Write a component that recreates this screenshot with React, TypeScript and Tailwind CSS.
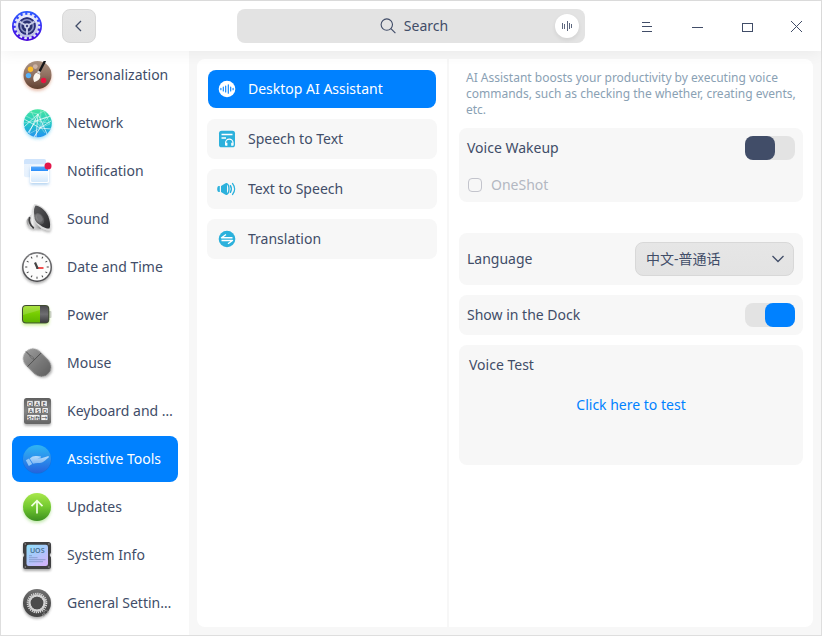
import { useState, type ReactNode } from "react";

/* ---------- sidebar icons, drawn on a 32 x 32 grid ---------- */

function Icon32({ children }: { children: ReactNode }) {
  return (
    <svg viewBox="0 0 32 32" className="size-8 shrink-0 overflow-visible" aria-hidden="true">
      {children}
    </svg>
  );
}

function Shade({ id, from, to, mid }: { id: string; from: string; to: string; mid?: string }) {
  return (
    <linearGradient id={id} x1="0" y1="0" x2="0" y2="1">
      <stop offset="0" stopColor={from} />
      {mid && <stop offset="0.5" stopColor={mid} />}
      <stop offset="1" stopColor={to} />
    </linearGradient>
  );
}

function Glow({ id, color, dev = 1.6 }: { id: string; color: string; dev?: number }) {
  return (
    <filter id={id} x="-30%" y="-30%" width="160%" height="170%">
      <feDropShadow dx="0" dy="2" stdDeviation={dev} floodColor={color} floodOpacity="0.4" />
    </filter>
  );
}

const PaletteIcon = (
  <Icon32>
    <defs>
      <Shade id="pal" from="#ab9382" mid="#8f7060" to="#60402f" />
      <Glow id="palGlow" color="#c2603a" />
    </defs>
    <circle cx="16.5" cy="16" r="14" fill="url(#pal)" filter="url(#palGlow)" />
    <circle cx="14.3" cy="7.6" r="2.4" fill="#cdb3a6" />
    <circle cx="9.5" cy="10.3" r="2.7" fill="#fbbb2b" />
    <circle cx="7.5" cy="16.6" r="2.7" fill="#57b1f8" />
    <circle cx="22.6" cy="21.5" r="2.7" fill="#e8143f" />
    <path d="M22.600 2h2.400l-1 2.400-4.700 9-2-1.200z" fill="#17171a" />
    <path d="M17.200 11.600l2.500 1.400-.9 2-2.800-1.500z" fill="#dcdcdc" />
    <path d="M15.400 13.700l3.600 1.900c1 3-1 6.400-5.800 7.400-.4-1.600-1.300-2.600-.8-5 .5-1.800 1.500-3.400 3-4.300z" fill="#fbf6ee" />
  </Icon32>
);

const NetworkIcon = (
  <Icon32>
    <defs>
      <Shade id="net" from="#46e5a0" mid="#22c8c4" to="#2492f2" />
      <Glow id="netGlow" color="#2fb8ee" />
      <clipPath id="netClip"><circle cx="16.800" cy="16.300" r="14" /></clipPath>
    </defs>
    <circle cx="16.8" cy="16.3" r="14" fill="url(#net)" filter="url(#netGlow)" />
    <g clipPath="url(#netClip)" fill="none" stroke="#fff">
      <path strokeWidth=".8" opacity=".85" d="M3 20L17 7l9 20M17 7l-2 23M3 12l16 9 11 1M6 27l9-13 15-5M17 7L8 26M13 30l6-9 11-7" />
      <path strokeWidth=".45" opacity=".75" d="M8 5l9 2 6-3M23 4l6 13-10 4M5 9l10 5 10-4-6 11M3 16l12-2 13 2M8 27l11-6M20 3l-1 18M10 4l5 10 9 12M28 9L13 30" />
    </g>
  </Icon32>
);

const NotificationIcon = (
  <Icon32>
    <defs>
      <Shade id="noBack" from="#eef5fe" to="#e6f1fd" />
      <Shade id="noFront" from="#fdfeff" to="#d6e9fb" />
      <Shade id="noBar" from="#56a8fb" to="#2b8ffb" />
      <Glow id="noGlow" color="#4a96dd" />
    </defs>
    <rect x="3" y="4.300" width="22" height="18" rx="2" fill="url(#noBack)" />
    <path d="M3 9V6a2 2 0 012-2h18a2 2 0 012 2v3z" fill="#cfe4fc" />
    <rect x="9" y="10.500" width="19" height="17.500" rx="1.800" fill="#fff" filter="url(#noGlow)" />
    <path d="M10 16v9.500a1.500 1.500 0 001.500 1.500h14a1.500 1.500 0 001.500-1.500V16z" fill="url(#noFront)" />
    <path d="M10 16v-4.500h17V16z" fill="url(#noBar)" />
    <circle cx="27" cy="11" r="3.500" fill="#e3174b" />
  </Icon32>
);

const SoundIcon = (
  <Icon32>
    <defs>
      <linearGradient id="spBody" x1="0" x2="1" y1="0" y2="0">
        <stop offset="0" stopColor="#9a9a9a" />
        <stop offset=".4" stopColor="#efefef" />
        <stop offset="1" stopColor="#858585" />
      </linearGradient>
      <linearGradient id="spCone" x1="0" y1="0" x2="1" y2="1">
        <stop offset="0" stopColor="#5a5a5c" />
        <stop offset="1" stopColor="#2c2c2e" />
      </linearGradient>
      <radialGradient id="spCap" cx=".45" cy=".4">
        <stop offset="0" stopColor="#a0a0a2" />
        <stop offset="1" stopColor="#58585a" />
      </radialGradient>
      <Glow id="spGlow" color="#555" dev={1.2} />
    </defs>
    <g filter="url(#spGlow)">
      <path d="M5.800 16.800C7 14 10 12.500 12 9l8 17c-4-.8-7-.3-9.500-1-3.500-1-5.500-4.700-4.700-8.200z" fill="url(#spBody)" />
      <path d="M8.800 14.200c-1.400 3 0 8.200 4 11" fill="none" stroke="#3f3f41" strokeWidth="1.800" />
      <path d="M13.600 1C20 1.600 27.300 7.600 29.400 15.500c1.200 4.600 1.300 9.500-.2 11.700-4.500 1-11.600-2.200-15.200-8.700C10.600 12.300 10.600 4.500 13.600 1z" fill="#dcdcdc" />
    </g>
    <path d="M14.600 2.600C20.500 3.500 26.200 9 28.200 16c1.100 4 1.200 7.400.3 9.400-4 .5-10-2.500-13.200-8C12.200 12 12.400 5.300 14.600 2.600z" fill="url(#spCone)" />
    <ellipse cx="18.300" cy="15.800" rx="4.300" ry="6.200" transform="rotate(-31 18.300 15.800)" fill="url(#spCap)" />
    <ellipse cx="18.800" cy="15.200" rx="2.400" ry="3.600" transform="rotate(-31 18.800 15.200)" fill="#77777a" />
  </Icon32>
);

const ClockIcon = (
  <Icon32>
    <defs>
      <Shade id="clk" from="#77777a" to="#4a4a4d" />
      <Glow id="clkGlow" color="#444" dev={1.2} />
    </defs>
    <circle cx="16" cy="16" r="15" fill="url(#clk)" filter="url(#clkGlow)" />
    <circle cx="16" cy="16" r="13.500" fill="#fcfcfc" />
    <g stroke="#444" strokeWidth="1">
      {[0, 30, 60, 90, 120, 150, 180, 210, 240, 270, 300, 330].map((a) => (
        <path key={a} d="M16 4.200v2.100" transform={`rotate(${a} 16 16)`} />
      ))}
    </g>
    <path d="M14 11.500l2.300 5.300" stroke="#444" strokeWidth="2.200" />
    <path d="M16.500 17h6" stroke="#f25252" strokeWidth="2" />
    <circle cx="16.300" cy="16.900" r="1.200" fill="#444" />
  </Icon32>
);

const PowerIcon = (
  <Icon32>
    <defs>
      <Shade id="bat" from="#9adb1d" mid="#74cc00" to="#5fb400" />
      <Shade id="batDark" from="#4c4c4f" mid="#6e6e71" to="#3c3c3f" />
      <Glow id="batGlow" color="#7fd000" dev={1.400} />
    </defs>
    <rect x="27.500" y="12" width="3" height="7" rx="1" fill="#cfcfd2" />
    <rect x="1" y="6" width="27.300" height="18.500" rx="4" fill="#414b33" filter="url(#batGlow)" />
    <path d="M19 7h5.300a3 3 0 013 3v10.500a3 3 0 01-3 3H19z" fill="url(#batDark)" />
    <path d="M5 7h14v16.500H5a3 3 0 01-3-3V10a3 3 0 013-3z" fill="url(#bat)" />
    <path d="M5 7h14v4L2 16v-6a3 3 0 013-3z" fill="#fff" opacity=".16" />
  </Icon32>
);

const MouseIcon = (
  <Icon32>
    <defs>
      <linearGradient id="mou" x1="0" y1="0" x2="0" y2="1">
        <stop offset="0" stopColor="#9a9a9a" />
        <stop offset=".5" stopColor="#7b7b7b" />
        <stop offset="1" stopColor="#636363" />
      </linearGradient>
      <Glow id="mouGlow" color="#444" dev={1.200} />
    </defs>
    <g transform="rotate(-45 16 15.500)">
      <rect x="6.200" y="-.3" width="19.600" height="31.600" rx="9.800" fill="url(#mou)" filter="url(#mouGlow)" />
      <path d="M6.500 11.700h19M16 0v11.500" fill="none" stroke="#4c4c4c" strokeWidth=".9" />
      <rect x="15.200" y="6" width="1.600" height="4.500" rx=".8" fill="#8d8d8d" stroke="#505050" strokeWidth=".5" />
    </g>
  </Icon32>
);

function Key({ x, y, w, label }: { x: number; y: number; w: number; label: string }) {
  return (
    <g>
      <rect x={x} y={y} width={w} height="6.100" rx="1" fill="#efefef" stroke="#3d3d3d" strokeWidth=".5" />
      <text x={x + w / 2} y={y + 5.100} textAnchor="middle" fontSize="5.800" fill="#333">
        {label}
      </text>
    </g>
  );
}

const KeyboardIcon = (
  <Icon32>
    <defs>
      <Shade id="kb" from="#606060" mid="#858585" to="#646464" />
      <Glow id="kbGlow" color="#444" dev={1.200} />
    </defs>
    <rect x="3" y="3" width="27" height="26" rx="2.500" fill="url(#kb)" filter="url(#kbGlow)" />
    <Key x={5.8} y={5.600} w={6.300} label="Q" />
    <Key x={12.900} y={5.600} w={6.300} label="A" />
    <Key x={20} y={5.600} w={6.300} label="E" />
    <Key x={6.800} y={12.500} w={6.300} label="A" />
    <Key x={13.900} y={12.500} w={6.300} label="S" />
    <Key x={21} y={12.500} w={6.300} label="D" />
    <Key x={5.800} y={19.400} w={13.200} label="Shift" />
    <Key x={19.900} y={19.400} w={7} label="→" />
  </Icon32>
);

const AssistiveIcon = (
  <Icon32>
    <defs>
      <Shade id="ast" from="#2fb5f3" mid="#2b8eec" to="#2563dc" />
      <Shade id="astHand" from="#b8dcfc" to="#7db8f5" />
    </defs>
    <circle cx="16" cy="16.500" r="14.300" fill="#1b66c4" opacity=".6" />
    <circle cx="16" cy="16" r="14" fill="url(#ast)" />
    <path d="M4.800 17.200l3.200-1.700 3.200 5.600-3.400 2z" fill="#8fc5f8" />
    <path d="M8.800 15.600c2-2.200 4.700-2.900 6.800-2.500 1.500.2 3 .1 4.100.4.900.4.200 1.200-.8 1.300l-2.600.4 4 .1 6.500-2.100c1-.3 1.600.5.800 1.200-2 1.600-4.200 4.100-6.500 5-2.800.9-6.100.1-9.100 1.300z" fill="url(#astHand)" />
  </Icon32>
);

const UpdatesIcon = (
  <Icon32>
    <defs>
      <Shade id="upd" from="#a9e84c" mid="#72c92f" to="#3c8f1f" />
      <Glow id="updGlow" color="#69c63a" />
    </defs>
    <circle cx="16" cy="16" r="14" fill="url(#upd)" filter="url(#updGlow)" />
    <path d="M16 22.500V10M10.500 15.200L16 9.700l5.500 5.500" fill="none" stroke="#f0ffe0" strokeWidth="1.700" />
  </Icon32>
);

const SystemInfoIcon = (
  <Icon32>
    <defs>
      <linearGradient id="sys" x1="0" y1="0" x2=".7" y2="1">
        <stop offset="0" stopColor="#8fe0fb" />
        <stop offset=".5" stopColor="#a8c9fb" />
        <stop offset="1" stopColor="#cfb5fa" />
      </linearGradient>
      <Glow id="sysGlow" color="#333" dev={1.200} />
    </defs>
    <path d="M4.500 3h23A2.500 2.500 0 0130 5.500v8l-1.400 2.500L30 18.500v9a2.500 2.500 0 01-2.500 2.500h-23A2.500 2.500 0 012 27.500v-9L3.400 16 2 13.500v-8A2.500 2.500 0 014.500 3z" fill="#414143" filter="url(#sysGlow)" />
    <rect x="5.500" y="5.700" width="21.500" height="21.300" rx="2.200" fill="url(#sys)" />
    <g fill="#9a9a9a">
      <circle cx="4.300" cy="5" r=".7" /><circle cx="27.900" cy="5" r=".7" /><circle cx="4.300" cy="28" r=".7" /><circle cx="27.900" cy="28" r=".7" />
    </g>
    <text x="16.200" y="13.800" textAnchor="middle" fontSize="7" fontWeight="600" fill="#46708f">UOS</text>
    <path d="M8 16.700h3M8 18.700h8.500M8 20.700h16.500M8 22.700h14" stroke="#7f94c4" strokeWidth=".8" />
  </Icon32>
);

const GeneralIcon = (
  <Icon32>
    <defs>
      <Shade id="gen" from="#737373" mid="#515151" to="#434343" />
      <Glow id="genGlow" color="#444" dev={1.200} />
    </defs>
    <circle cx="16" cy="16" r="14" fill="url(#gen)" filter="url(#genGlow)" />
    <circle cx="16" cy="16" r="9.400" fill="none" stroke="#e2e2e2" strokeWidth="1.800" strokeDasharray="1.200 .908" />
    <circle cx="16" cy="16" r="7.500" fill="none" stroke="#d2d2d2" strokeWidth="2.400" />
    <circle cx="16" cy="16" r="6.200" fill="#4c4c4c" />
    <circle cx="25" cy="25.300" r="2" fill="none" stroke="#a5a5a5" strokeWidth="1" strokeDasharray=".9 .6" />
    <circle cx="22.600" cy="28" r="1.100" fill="none" stroke="#999" strokeWidth=".8" />
  </Icon32>
);

function AppLogo() {
  return (
    <svg viewBox="0 0 30 30" className="size-[30px] shrink-0" aria-hidden="true">
      <defs>
        <Shade id="logo" from="#2c5cff" mid="#3a32f5" to="#4a06d8" />
        <Shade id="logoRing" from="#eceefa" to="#bcc0e0" />
      </defs>
      <circle cx="15" cy="15" r="15" fill="url(#logo)" />
      <circle cx="15" cy="15" r="12" fill="none" stroke="#dfe3fa" strokeWidth="2.600" strokeDasharray="2.600 2.112" />
      <circle cx="15" cy="15" r="10" fill="none" stroke="url(#logoRing)" strokeWidth="2.600" />
      <circle cx="15" cy="15" r="8.700" fill="#2a3070" />
      <circle cx="15" cy="15" r="6.300" fill="none" stroke="#8f95c6" strokeWidth="1.600" />
      <g stroke="#c4c9e6" strokeWidth="2">
        <path d="M15 15v8.700M15 15L7.500 10.700M15 15l7.500-4.300" />
      </g>
      <circle cx="15" cy="15" r="2.800" fill="#d3d7ee" />
      <circle cx="15" cy="15" r="1.200" fill="#3a3f80" />
    </svg>
  );
}

/* ---------- tool list icons, drawn on a 20 x 20 grid ---------- */

const AssistantGlyph = (
  <svg viewBox="0 0 20 20" className="size-5 shrink-0" aria-hidden="true">
    <circle cx="10" cy="10" r="8.300" fill="#fff" />
    <path d="M3.900 9.200v1.600M6.300 8v4M8.700 7v6M11.300 5.800v8.400M13.700 8v4M16.100 9.200v1.600" stroke="#0081ff" strokeWidth="1.100" strokeLinecap="round" />
  </svg>
);

const SpeechToTextGlyph = (
  <svg viewBox="0 0 20 20" className="size-5 shrink-0" aria-hidden="true">
    <rect x="2" y="1.700" width="16" height="16.600" rx="2.600" fill="#2cb1dc" />
    <path d="M4.500 5.500h11M4.500 9h4.500" stroke="#fff" strokeWidth="1.300" />
    <path d="M8.600 16.500v-2.700a3.700 3.700 0 017.400 0v2.700" fill="none" stroke="#fff" strokeWidth="1.200" />
    <path d="M8.800 13.800h1.600v3H8.800zM14.200 13.800h1.600v3h-1.600z" fill="#fff" />
  </svg>
);

const TextToSpeechGlyph = (
  <svg viewBox="0 0 20 20" className="size-5 shrink-0" aria-hidden="true">
    <path d="M2.800 7v6H1.800C.8 13 .2 11.700.2 10s.6-3 1.600-3z" fill="#2cb1dc" />
    <path d="M4 7l4.500-2.700c.7-.4 1.500 0 1.500.8v9.800c0 .8-.8 1.200-1.500.8L4 13z" fill="#2cb1dc" />
    <path d="M9.500 4.700c3.300 1.300 3.300 9.300 0 10.600M13.400 6.700c1.200 2 1.200 4.600 0 6.600M15.600 4.600c2.600 3.200 2.600 7.600 0 10.800" fill="none" stroke="#2cb1dc" strokeWidth="1.400" strokeLinecap="round" />
  </svg>
);

const TranslationGlyph = (
  <svg viewBox="0 0 20 20" className="size-5 shrink-0" aria-hidden="true">
    <circle cx="10" cy="10" r="8.300" fill="#2cb1dc" />
    <path d="M15.500 8.800h-11L9 5.500M4.500 11.500h11L11 14.800" fill="none" stroke="#fff" strokeWidth="1.400" strokeLinejoin="round" />
  </svg>
);

/* ---------- shared pieces ---------- */

function WindowButton({ label, children }: { label: string; children: ReactNode }) {
  return (
    <button type="button" aria-label={label} className="flex h-[50px] w-[50px] items-center justify-center">
      <svg viewBox="0 0 14 14" className="size-3.5 overflow-visible" shapeRendering="crispEdges" fill="#414d68">
        {children}
      </svg>
    </button>
  );
}

function Toggle({ id, on, onChange }: { id: string; on: boolean; onChange: (v: boolean) => void }) {
  return (
    <input
      id={id}
      type="checkbox"
      role="switch"
      checked={on}
      onChange={(e) => onChange(e.target.checked)}
      className="h-6 w-[50px] shrink-0 appearance-none rounded-lg bg-[#e3e3e3] before:block before:h-6 before:w-[30px] before:rounded-lg before:bg-[#414d68] checked:before:ml-5 checked:before:bg-[#0081ff]"
    />
  );
}

const categories = [
  { name: "Personalization", icon: PaletteIcon },
  { name: "Network", icon: NetworkIcon },
  { name: "Notification", icon: NotificationIcon },
  { name: "Sound", icon: SoundIcon },
  { name: "Date and Time", icon: ClockIcon },
  { name: "Power", icon: PowerIcon },
  { name: "Mouse", icon: MouseIcon },
  { name: "Keyboard and …", icon: KeyboardIcon },
  { name: "Assistive Tools", icon: AssistiveIcon },
  { name: "Updates", icon: UpdatesIcon },
  { name: "System Info", icon: SystemInfoIcon },
  { name: "General Settin…", icon: GeneralIcon },
];

const tools = [
  { name: "Desktop AI Assistant", icon: AssistantGlyph },
  { name: "Speech to Text", icon: SpeechToTextGlyph },
  { name: "Text to Speech", icon: TextToSpeechGlyph },
  { name: "Translation", icon: TranslationGlyph },
];

function TitleBar() {
  return (
    <header className="relative z-10 grid h-[50px] grid-cols-[236px_minmax(0,1fr)_236px] items-center bg-white shadow-[0_3px_14px_rgba(0,0,0,0.05)]">
      <div className="flex items-center gap-5 pl-[11px]">
        <AppLogo />
        <button
          type="button"
          aria-label="Back"
          className="flex size-[34px] items-center justify-center rounded-lg border border-[#d8d8d8] bg-linear-to-b from-[#e6e6e6] to-[#e3e3e3]"
        >
          <svg viewBox="0 0 12 12" className="size-3" fill="none" stroke="#414d68" strokeWidth="1.300">
            <path d="M8 1L3 6l5 5" />
          </svg>
        </button>
      </div>
      <div className="flex h-[34px] items-center rounded-lg bg-[#e3e3e3] pr-1.5">
        <label className="flex min-w-0 flex-1 items-center justify-center gap-2 pl-9">
          <svg viewBox="0 0 16 16" className="size-4 shrink-0" fill="none" stroke="#414d68" strokeWidth="1.100">
            <circle cx="6.800" cy="6.600" r="5.700" />
            <path d="M10.900 10.700l4.500 4.500" />
          </svg>
          <input
            type="text"
            aria-label="Search"
            placeholder="Search"
            className="field-sizing-content bg-transparent outline-none placeholder:text-[#414d68]"
          />
        </label>
        <button
          type="button"
          aria-label="Voice search"
          className="flex size-6 items-center justify-center rounded-full bg-white shadow-[0_2px_4px_rgba(0,0,0,0.08)]"
        >
          <svg viewBox="0 0 12 12" className="size-3" stroke="#414d68" shapeRendering="crispEdges">
            <path d="M1.500 3v6M3.500 4v5M6.500 1v10M8.500 3v6M10.500 4v4" strokeWidth="1" opacity=".85" />
          </svg>
        </button>
      </div>
      <div className="flex justify-end">
        <WindowButton label="Menu">
          <path d="M3 3h8v1H3zM3 7h10v1H3zM3 12h10v1H3z" />
        </WindowButton>
        <WindowButton label="Minimize">
          <path d="M3 8h11v1H3z" />
        </WindowButton>
        <WindowButton label="Maximize">
          <path d="M3 4h11v9H3zM4 5v7h9V5z" fillRule="evenodd" />
        </WindowButton>
        <WindowButton label="Close">
          <path d="M2 2l11 11M13 2L2 13" stroke="#414d68" strokeWidth="1" fill="none" />
        </WindowButton>
      </div>
    </header>
  );
}

export default function App() {
  const [category, setCategory] = useState("Assistive Tools");
  const [tool, setTool] = useState("Desktop AI Assistant");
  const [wakeup, setWakeup] = useState(false);
  const [dock, setDock] = useState(true);

  return (
    <div className="flex min-h-screen flex-col border border-[#dedede] bg-[#f7f7f7] font-['Noto_Sans','Noto_Sans_CJK_SC',sans-serif] text-sm text-[#414d68]">
      <TitleBar />
      <div className="flex flex-1">
        <nav className="flex w-[188px] shrink-0 flex-col gap-0.5 bg-white px-[11px] pt-px">
          {categories.map(({ name, icon }) => (
            <button
              key={name}
              type="button"
              onClick={() => setCategory(name)}
              className={
                name === category
                  ? "flex h-[46px] items-center gap-3.5 rounded-lg bg-[#0081ff] pl-[9px] text-left whitespace-nowrap text-white"
                  : "flex h-[46px] items-center gap-3.5 rounded-lg pl-[9px] text-left whitespace-nowrap"
              }
            >
              {icon}
              {name}
            </button>
          ))}
        </nav>

        <main className="flex min-w-0 flex-1 p-2">
          <div className="flex min-w-0 flex-1 gap-0.5 overflow-hidden rounded-lg">
            <ul className="flex w-[250px] shrink-0 flex-col gap-2.5 bg-white p-2.5">
              {tools.map(({ name, icon }) => (
                <li key={name} className="flex h-10 items-center">
                  <button
                    type="button"
                    onClick={() => setTool(name)}
                    className={
                      name === tool
                        ? "mx-px flex h-[38px] flex-1 items-center gap-[11px] rounded-lg bg-[#0081ff] pl-[9px] text-white"
                        : "flex h-10 flex-1 items-center gap-[11px] rounded-lg bg-[#f7f7f7] pl-2.5"
                    }
                  >
                    {icon}
                    {name}
                  </button>
                </li>
              ))}
            </ul>

            <section className="flex min-w-0 flex-1 flex-col bg-white px-2.5 pt-[11px] pb-2.5">
              <p className="px-[7px] text-xs leading-4 text-[#8aa1b4]">
                AI Assistant boosts your productivity by executing voice commands, such as checking the whether,
                creating events, etc.
              </p>

              <div className="mt-2.5 h-[74px] rounded-lg bg-[#f7f7f7] px-2">
                <div className="flex h-10 items-center justify-between">
                  <label htmlFor="wakeup">Voice Wakeup</label>
                  <Toggle id="wakeup" on={wakeup} onChange={setWakeup} />
                </div>
                <label className="flex h-[34px] items-center gap-2.5 text-[#b3b8c2]">
                  <input
                    type="checkbox"
                    disabled={!wakeup}
                    className="ml-0.5 size-3 appearance-none rounded-[3px] outline outline-[#c3c4cc]"
                  />
                  OneShot
                </label>
              </div>

              <div className="mt-[31px] flex h-[52px] items-center justify-between rounded-lg bg-[#f7f7f7] pr-[9px] pl-2">
                <label htmlFor="language">Language</label>
                <div className="relative">
                  <select
                    id="language"
                    className="h-[34px] w-[159px] appearance-none rounded-lg border border-[#d8d8d8] bg-linear-to-b from-[#e6e6e6] to-[#e3e3e3] pl-2.5"
                  >
                    <option>中文-普通话</option>
                  </select>
                  <svg
                    viewBox="0 0 12 12"
                    className="pointer-events-none absolute top-[11px] right-2.5 size-3"
                    fill="none"
                    stroke="#414d68"
                    strokeWidth="1.300"
                  >
                    <path d="M.5 3L6 8.500 11.500 3" />
                  </svg>
                </div>
              </div>

              <div className="mt-2.5 flex h-10 items-center justify-between rounded-lg bg-[#f7f7f7] px-2">
                <label htmlFor="dock">Show in the Dock</label>
                <Toggle id="dock" on={dock} onChange={setDock} />
              </div>

              <div className="mt-2.5 flex h-[120px] flex-col gap-5 rounded-lg bg-[#f7f7f7] p-2.5">
                <h2>Voice Test</h2>
                <a href="#voice-test" className="self-center text-[#0081ff]">
                  Click here to test
                </a>
              </div>
            </section>
          </div>
        </main>
      </div>
    </div>
  );
}
